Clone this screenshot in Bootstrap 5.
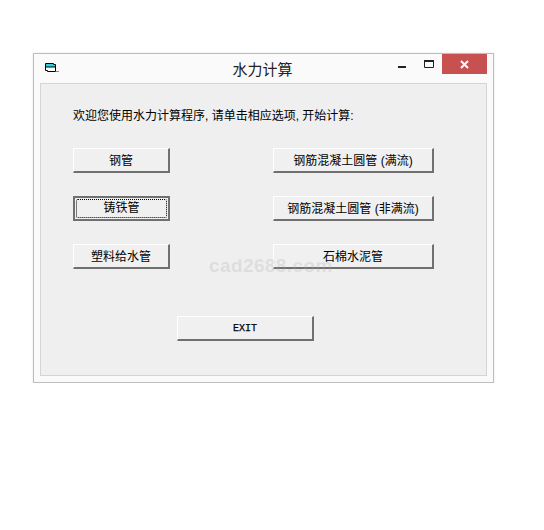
<!DOCTYPE html>
<html lang="zh-CN">
<head>
    <meta charset="UTF-8">
    <meta name="viewport" content="width=device-width, initial-scale=1.0">
    <title>水力计算</title>
    <link href="https://cdn.jsdelivr.net/npm/bootstrap@5.3.0/dist/css/bootstrap.min.css" rel="stylesheet">
    <style>
        body {
            background-color: #fff;
            font-family: "Liberation Sans", "Noto Sans CJK SC", sans-serif;
            color: #000;
            padding: 53px 0 0 33px;
        }
        .win-frame {
            position: relative;
            width: 461px;
            height: 330px;
            background-color: #fafafa;
            border: 1px solid #bdbdbd;
            box-shadow: 0 0 2px rgba(0, 0, 0, .12);
            padding: 0 6px 6px;
        }
        .win-titlebar {
            height: 29px;
            flex: none;
        }
        .win-icon {
            position: absolute;
            left: 11px;
            top: 9px;
        }
        .win-title {
            font-size: 15px;
            color: #222;
            line-height: 29px;
            margin-top: 1px;
            margin-right: 2px;
        }
        .win-controls {
            position: absolute;
            top: 0;
            right: 6px;
        }
        .ctl-min {
            margin: 12px 18px 0 0;
            display: block;
        }
        .ctl-max {
            margin: 6px 8px 0 0;
            display: block;
        }
        .ctl-close {
            width: 45px;
            height: 20px;
            background-color: #c75050;
        }
        .win-client {
            height: 294px;
            background-color: #efefef;
            border: 1px solid #d4d4d4;
            padding: 24px 0 0 32px;
        }
        .intro-text {
            font-size: 12px;
            line-height: 16px;
            height: 16px;
            margin-bottom: 24px;
        }
        .btn-rows { row-gap: 23px; }
        .vb-btn {
            height: 25px;
            padding: 1px 0 0;
            font-size: 12px;
            line-height: 20px;
            color: #000;
            background-color: #f0f0f0;
            border-style: solid;
            border-width: 1px 2px 2px 1px;
            border-color: #fff #707070 #707070 #fff;
            border-radius: 0;
        }
        .btn-short { width: 97px; }
        .btn-long { width: 161px; margin-left: 103px; }
        .btn-exit {
            width: 137px;
            margin: 47px 0 0 104px;
            font-family: "Liberation Mono", monospace;
            font-size: 10px;
            -webkit-text-stroke: .25px #000;
        }
        .btn-focused {
            border: 2px solid #707070;
            padding: 1px;
        }
        .btn-focused span {
            display: block;
            height: 100%;
            line-height: 17px;
            border: 1px dotted #000;
            border-radius: 2px;
        }
        .watermark {
            position: absolute;
            left: 175px;
            top: 198px;
            font-size: 19px;
            font-weight: bold;
            letter-spacing: .4px;
            color: rgba(170, 170, 170, .25);
            pointer-events: none;
        }
    </style>
</head>
<body>
    <div class="win-frame d-flex flex-column">
        <!-- Title bar -->
        <div class="win-titlebar d-flex align-items-center justify-content-center">
            <div class="win-title">水力计算</div>
        </div>
        <svg class="win-icon" width="14" height="11" viewBox="0 0 14 11">
            <path d="M.5.5h8v1h2v7h-8v-1h-2z" fill="#fff" stroke="#000"/>
            <path d="M1 1h7v1h2v2H1z" fill="#2fd0e0"/>
            <path d="M1 4h9" stroke="#000"/>
            <path d="M11 8h3v1h-3z" fill="#888"/>
        </svg>
        <div class="win-controls d-flex align-items-start">
            <svg class="ctl-min" width="8" height="2" viewBox="0 0 8 2"><path d="M0 0h8v2H0z" fill="#222"/></svg>
            <svg class="ctl-max" width="10" height="8" viewBox="0 0 10 8"><path d="M.5.5h9v7h-9z" fill="none" stroke="#222"/><path d="M0 0h10v2H0z" fill="#222"/></svg>
            <div class="ctl-close d-flex align-items-center justify-content-center">
                <svg width="9" height="9" viewBox="0 0 9 9"><path d="M1 1l7 7M8 1L1 8" stroke="#fff" stroke-width="2"/></svg>
            </div>
        </div>

        <!-- Client area -->
        <div class="win-client">
            <div class="intro-text">欢迎您使用水力计算程序, 请单击相应选项, 开始计算:</div>
            <div class="btn-rows d-flex flex-column">
                <div class="d-flex">
                    <button class="vb-btn btn-short">钢管</button>
                    <button class="vb-btn btn-long">钢筋混凝土圆管 (满流)</button>
                </div>
                <div class="d-flex">
                    <button class="vb-btn btn-short btn-focused"><span>铸铁管</span></button>
                    <button class="vb-btn btn-long">钢筋混凝土圆管 (非满流)</button>
                </div>
                <div class="d-flex">
                    <button class="vb-btn btn-short">塑料给水管</button>
                    <button class="vb-btn btn-long">石棉水泥管</button>
                </div>
            </div>
            <button class="vb-btn btn-exit d-block">EXIT</button>
        </div>
        <div class="watermark">cad2688.com</div>
    </div>

    <script src="https://cdn.jsdelivr.net/npm/bootstrap@5.3.0/dist/js/bootstrap.bundle.min.js"></script>
</body>
</html>
